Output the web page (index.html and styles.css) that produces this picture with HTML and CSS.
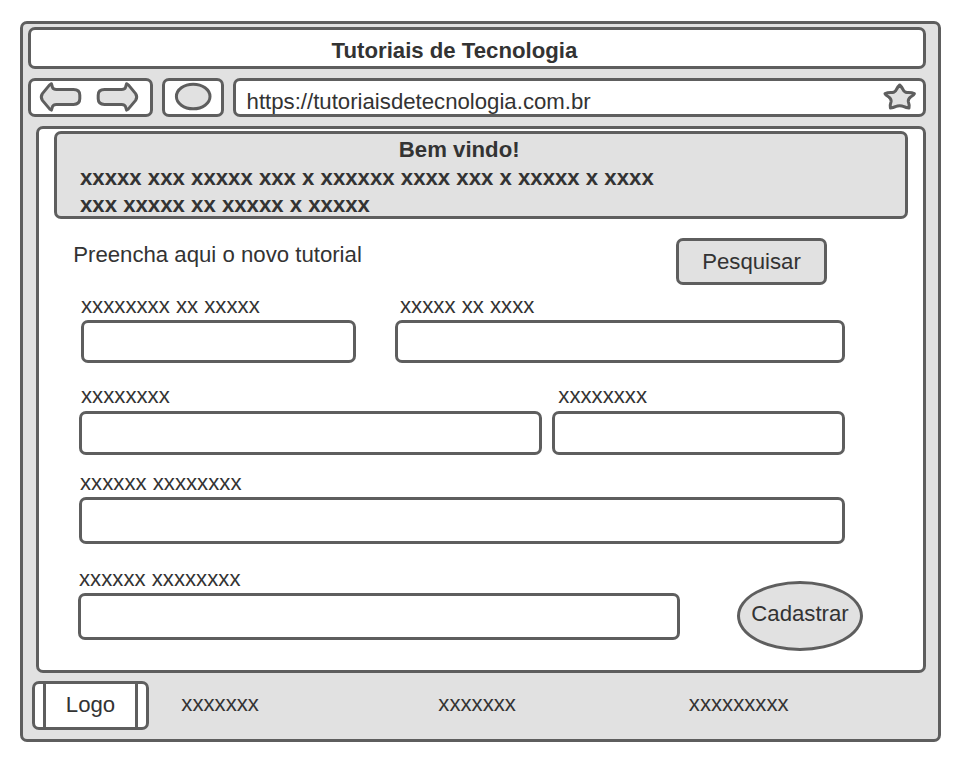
FILE: index.html
```html
<!DOCTYPE html>
<html lang="pt-BR">
<head>
<meta charset="utf-8">
<title>Tutoriais de Tecnologia</title>
<link rel="stylesheet" href="styles.css">
</head>
<body>
<div class="window">
  <header class="box titlebar">Tutoriais de Tecnologia</header>
  <nav class="toolbar">
    <div class="box">
      <svg class="icon" viewBox="31 81 119 33">
        <path id="arrow" d="M51.4 83.7 L49.6 84.9 L42.4 93.6 Q40.2 97 42.4 100.4 L49.6 108.9 L51.4 110.1 L52.6 106.4 Q53.4 104.6 56.5 104.4 H73.5 Q79.8 104.4 79.8 98.8 V95.2 Q79.8 89.6 73.5 89.6 H56.5 Q53.4 89.4 52.6 87.6 Z"/>
        <use href="#arrow" transform="translate(178 0) scale(-1 1)"/>
      </svg>
    </div>
    <div class="box">
      <svg class="icon" viewBox="165 81 56 33"><ellipse cx="193.2" cy="96.5" rx="16.8" ry="12.3"/></svg>
    </div>
    <div class="box address">
      <span>https://tutoriaisdetecnologia.com.br</span>
      <svg class="icon star" viewBox="882 81 36 33"><path d="M899.7 85 Q901.5 86.5 903 89.5 Q904.3 92.4 907 92.6 Q911.5 92.3 914.4 93.6 Q913.8 95.2 910.6 97 Q908 98.8 908.3 101.5 Q909.6 105 909 108 Q906 107.8 904 106.6 Q899.7 105 895.4 106.6 Q893.4 107.8 890.4 108 Q889.8 105 891.1 101.5 Q891.4 98.8 888.8 97 Q885.6 95.2 885 93.6 Q887.9 92.3 892.4 92.6 Q895.1 92.4 896.4 89.5 Q897.9 86.5 899.7 85 Z"/></svg>
    </div>
  </nav>
  <main class="box content">
    <section class="box banner">
      <h1>Bem vindo!</h1>
      <p>xxxxx xxx xxxxx xxx x xxxxxx xxxx xxx x xxxxx x xxxx<br>xxx xxxxx xx xxxxx x xxxxx</p>
    </section>
    <div class="intro">
      <p>Preencha aqui o novo tutorial</p>
      <button class="box search" type="button">Pesquisar</button>
    </div>
    <form>
      <div class="row row-1">
        <label>xxxxxxxx xx xxxxx<input class="box"></label>
        <label class="inset">xxxxx xx xxxx<input class="box"></label>
      </div>
      <div class="row row-2">
        <label>xxxxxxxx<input class="box"></label>
        <label class="inset">xxxxxxxx<input class="box"></label>
      </div>
      <div class="row row-3">
        <label>xxxxxx xxxxxxxx<input class="box"></label>
      </div>
      <div class="row row-4">
        <label>xxxxxx xxxxxxxx<input class="box"></label>
        <button class="box submit" type="button">Cadastrar</button>
      </div>
    </form>
  </main>
  <footer>
    <div class="box logo"><span>Logo</span></div>
    <span>xxxxxxx</span>
    <span>xxxxxxx</span>
    <span>xxxxxxxxx</span>
  </footer>
</div>
</body>
</html>
```
FILE: styles.css
```css
* { box-sizing: border-box; margin: 0; padding: 0; }

body {
  padding: 21px 20px;
  background: #fff;
  color: #333;
  font: 22.19px/25px "Liberation Sans", Arial, sans-serif;
}

.box { border: 3px solid #5e5e5e; border-radius: 7px; background: #fff; }

.window {
  width: 921px;
  height: 721px;
  padding: 3px 12px 0 5px;
  border: 3px solid #5e5e5e;
  border-radius: 7px;
  background: #e1e1e1;
}

.titlebar { height: 42px; padding: 8px 0 0 300.6px; font-weight: bold; }

.toolbar {
  display: grid;
  grid-template-columns: 125px 62px 693px;
  gap: 9px;
  height: 39px;
  margin-top: 9px;
}
.icon { display: block; width: 100%; height: 33px; fill: #e1e1e1; stroke: #5e5e5e; stroke-width: 3; stroke-linejoin: round; }
.address { display: flex; justify-content: space-between; padding: 0 5px 0 10.6px; }
.address span { padding-top: 8px; }
.star { width: 36px; }

.content { height: 547px; margin: 9px 0 0 8px; padding: 2px 0 0 15px; }

.banner { width: 854px; height: 88px; padding: 3px 0 0 23px; background: #e1e1e1; font-weight: bold; }
.banner h1 { padding-left: 318.8px; font-size: inherit; }
.banner p { margin-top: 2px; line-height: 27px; white-space: nowrap; }

.intro { display: flex; justify-content: space-between; width: 773px; margin-top: 19px; padding-left: 19.2px; }
.intro p { padding-top: 4px; }
button { color: inherit; font: inherit; }
.search { width: 151px; height: 47px; background: #e1e1e1; }

form { padding: 8px 0 0 25px; }
.row { display: grid; width: 766px; }
label { display: block; padding-left: 2px; }
input { display: block; width: calc(100% + 2px); margin-left: -2px; }

.row-1 { grid-template-columns: 275px 450px; column-gap: 39px; padding-left: 2px; }
.row-1 label { padding-left: 0; }
.row-1 input { width: 100%; height: 43px; margin: 2px 0 0; }
.row-1 .inset { padding-left: 5px; }
.row-1 .inset input { width: 450px; margin-left: -5px; }

.row-2 { grid-template-columns: 463px 293px; column-gap: 10px; margin-top: 20px; }
.row-2 input { height: 44px; margin-top: 3px; }
.row-2 .inset { padding-left: 6.3px; }
.row-2 .inset input { width: 293px; margin-left: -6.3px; }

.row-3 { margin-top: 15px; }
.row-3 label { padding-left: 1px; }
.row-3 input { width: 766px; height: 47px; margin: 2px 0 0 -1px; }

.row-4 { grid-template-columns: 602px 126px; column-gap: 57px; margin: 22px 0 0 -1px; }
.row-4 label { padding-left: 1px; }
.row-4 input { width: 602px; height: 47px; margin: 2px 0 0 -1px; }
.submit { width: 126px; height: 70px; margin-top: 15px; padding-bottom: 5px; border-radius: 50%; background: #e1e1e1; }

footer { display: grid; grid-template-columns: 149.3px 257px 250.5px auto; margin: 8px 0 0 4px; }
footer > span { padding-top: 10px; }
.logo { width: 117px; height: 49px; padding: 0 8px; }
.logo span { display: block; height: 43px; padding-top: 8px; border: solid #5e5e5e; border-width: 0 3px; text-align: center; }
```
